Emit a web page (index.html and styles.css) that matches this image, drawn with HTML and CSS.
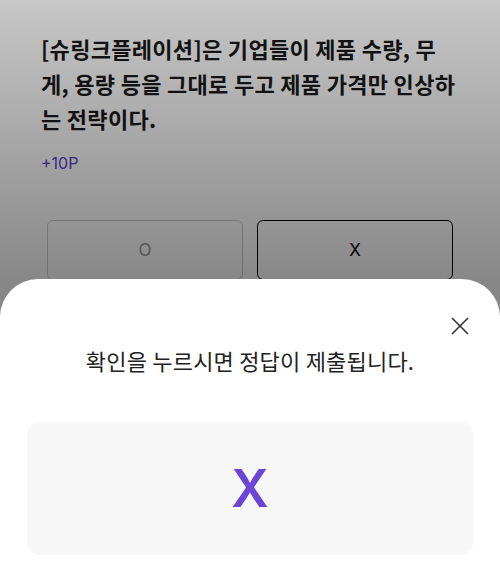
FILE: index.html
```html
<!DOCTYPE html>
<html>
<head>
    <title>Quiz Submit</title>
    <link rel="stylesheet" href="styles.css">
</head>
<body>
    <div class="quiz">
        <p class="question">[슈링크플레이션]은 기업들이 제품 수량, 무게, 용량 등을 그대로 두고 제품 가격만 인상하는 전략이다.</p>
        <p class="point">+10P</p>
        <div class="choices">
            <button class="choice">O</button>
            <button class="choice selected">X</button>
        </div>
    </div>

    <div class="dim"></div>

    <div class="sheet">
        <div class="sheet-head">
            <button class="close" aria-label="닫기">
                <svg width="18" height="18" viewBox="0 0 18 18">
                    <path d="M1 1L17 17M17 1L1 17" stroke="#333" stroke-width="1.6" fill="none"/>
                </svg>
            </button>
        </div>
        <p class="notice">확인을 누르시면 정답이 제출됩니다.</p>
        <div class="answer">X</div>
    </div>
</body>
</html>
```

FILE: styles.css
```css
body {
    margin: 0;
    width: 500px;
    height: 580px;
    overflow: hidden;
    position: relative;
    font-family: "Noto Sans CJK KR", "Noto Sans", sans-serif;
    background: #fff;
}
.quiz {
    padding: 31px 43px 0 41px;
}
.question {
    margin: 0;
    font-size: 22px;
    line-height: 35px;
    font-weight: 700;
    color: #1a1a1a;
    letter-spacing: 0.3px;
    word-break: break-all;
}
.point {
    margin: 16px 0 0 0;
    font-size: 16px;
    line-height: 22px;
    color: #5a3bd0;
    font-family: "Inter", "Noto Sans CJK KR", sans-serif;
}
.choices {
    display: flex;
    gap: 14px;
    margin: 46px 4px 0 6px;
}
.choice {
    flex: 1;
    height: 60px;
    background: #fff;
    border: 1px solid #ccc;
    border-radius: 6px;
    font-family: "Inter", sans-serif;
    font-size: 17px;
    color: #999;
}
.choice.selected {
    border-color: #000;
    color: #000;
}
.dim {
    position: absolute;
    inset: 0;
    background: linear-gradient(to bottom, rgba(0,0,0,0.22), rgba(0,0,0,0.47) 280px);
}
.sheet {
    position: absolute;
    left: 0;
    right: 0;
    top: 279px;
    bottom: -40px;
    background: #fff;
    border-radius: 38px 38px 0 0;
    padding: 0 27px;
}
.sheet-head {
    display: flex;
    justify-content: flex-end;
    padding-top: 38px;
    margin-right: 4px;
}
.close {
    border: none;
    background: none;
    padding: 0;
    width: 18px;
    height: 18px;
    display: flex;
}
.notice {
    margin: 9px 0 0 0;
    text-align: center;
    font-size: 22px;
    line-height: 32px;
    color: #222;
    letter-spacing: 0.2px;
}
.answer {
    margin-top: 46px;
    height: 133px;
    background: #f7f7f7;
    border-radius: 12px;
    display: flex;
    align-items: center;
    justify-content: center;
    font-family: "Inter", sans-serif;
    font-size: 52px;
    font-weight: 600;
    color: #6b46d6;
}
```
